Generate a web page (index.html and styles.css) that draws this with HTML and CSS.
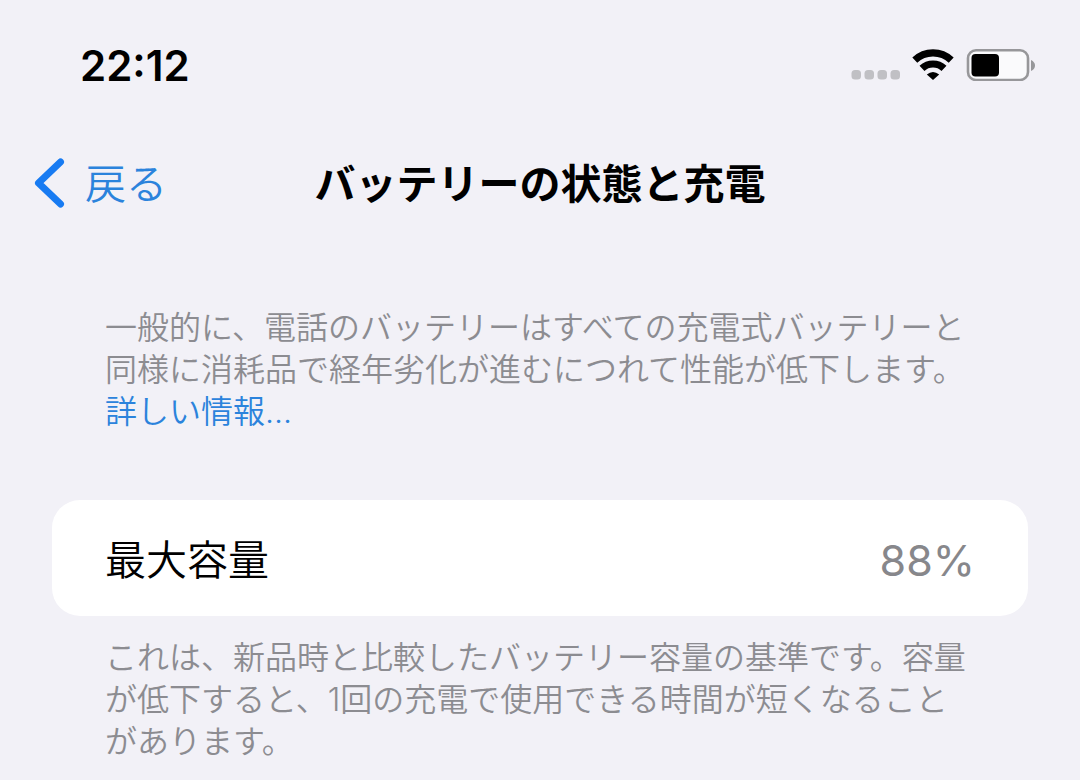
FILE: index.html
```html
<!DOCTYPE html>
<html lang="ja">
<head>
    <meta charset="UTF-8">
    <meta name="viewport" content="width=device-width, initial-scale=1.0">
    <title>バッテリーの状態と充電</title>
    <link rel="stylesheet" href="styles.css">
</head>
<body>
    <!-- Status bar -->
    <div class="statusBar">
        <time class="clock">22:12</time>
        <div class="statusIcons">
            <svg class="signal" width="49" height="32" viewBox="0 0 49 32" fill="#c0c0c4" aria-hidden="true">
                <rect x="0.5" y="21" width="9.5" height="9.5" rx="3.5"/>
                <rect x="13.5" y="21" width="9.5" height="9.5" rx="3.5"/>
                <rect x="26.5" y="21" width="9.5" height="9.5" rx="3.5"/>
                <rect x="39.5" y="21" width="9.5" height="9.5" rx="3.5"/>
            </svg>
            <svg class="wifi" width="42" height="32" viewBox="0 0 42 32" aria-hidden="true">
                <g fill="none" stroke="#000" stroke-width="7.2">
                    <path d="M2.8 11.2A26.5 26.5 0 0 1 39.2 11.2"/>
                    <path d="M10 19.4A16 16 0 0 1 32 19.4"/>
                </g>
                <path d="M14.8 25.4Q21 20.4 27.2 25.4L21 31Z"/>
            </svg>
            <svg class="battery" width="70" height="32" viewBox="0 0 70 32" aria-hidden="true">
                <rect x="2" y="1.3" width="60" height="29.7" rx="8" fill="#fafafc" stroke="#97979a" stroke-width="2.6"/>
                <rect x="5.5" y="5" width="27.5" height="22.5" rx="4"/>
                <path d="M65 11Q69 13 69 16.5T65 22Z" fill="#97979a"/>
            </svg>
        </div>
    </div>

    <!-- Navigation -->
    <header class="navBar">
        <a class="back" href="#">
            <svg width="32" height="54" viewBox="0 -4 32 54" fill="none" stroke="#187bf2" stroke-width="7" stroke-linecap="round" stroke-linejoin="round" aria-hidden="true">
                <path d="M26.5 4L4.5 25L26.5 46"/>
            </svg>
            <span>戻る</span>
        </a>
        <h1>バッテリーの状態と充電</h1>
    </header>

    <main>
        <p class="note">一般的に、電話のバッテリーはすべての充電式バッテリーと同様に消耗品で経年劣化が進むにつれて性能が低下します。<a href="#">詳しい情報...</a></p>

        <dl class="card">
            <dt>最大容量</dt>
            <dd>88%</dd>
        </dl>

        <p class="note">これは、新品時と比較したバッテリー容量の基準です。容量が低下すると、1回の充電で使用できる時間が短くなることがあります。</p>
    </main>
</body>
</html>
```
FILE: styles.css
```css
* {
    box-sizing: border-box;
}

body {
    margin: 0;
    background-color: #f2f1f7;
    color: #000;
    font-family: Inter, "Noto Sans CJK JP", sans-serif;
}

a {
    color: #2b83dc;
    text-decoration: none;
}

.statusBar {
    display: flex;
    align-items: center;
    justify-content: space-between;
    height: 130px;
    padding: 0 44px 0 80px;
}

.clock {
    font-size: 42px;
    font-weight: 600;
}

.statusIcons {
    display: flex;
    align-items: center;
    gap: 12px;
}

.navBar {
    display: grid;
    grid-template-columns: 1fr auto 1fr;
    align-items: center;
    height: 102px;
    padding: 0 34px;
}

.back {
    display: flex;
    align-items: center;
    gap: 19px;
    font-size: 41px;
    font-weight: 350;
}

h1 {
    margin: 0;
    font-size: 41px;
    font-weight: 600;
}

main {
    padding: 75px 52px 24px;
}

.note {
    margin: 0;
    padding: 0 53px;
    color: #8c8c91;
    font-size: 32px;
    font-weight: 350;
    line-height: 42px;
}

.card {
    display: flex;
    align-items: center;
    justify-content: space-between;
    margin: 67px 0 21px;
    padding: 30px 53px 26px;
    border-radius: 28px;
    background-color: #fff;
    font-size: 41px;
    line-height: 60px;
}

.card dt {
    font-weight: 350;
}

.card dd {
    margin: 0;
    color: #87878b;
    font-size: 43px;
    font-weight: 400;
}
```
